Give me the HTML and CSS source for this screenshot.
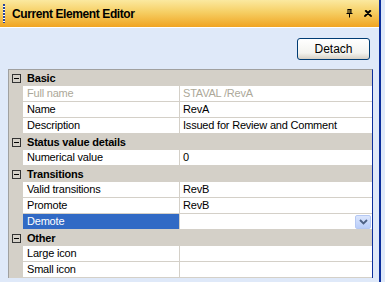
FILE: index.html
```html
<!DOCTYPE html>
<html lang="en">

<head>
    <meta charset="UTF-8">
    <meta name="viewport" content="width=device-width, initial-scale=1.0">
    <title>Current Element Editor</title>
    <link rel="stylesheet" href="styles.css">
</head>

<body>

    <div class="panel">
        <div class="panel-main">
            <!-- Barre de titre -->
            <div class="titlebar">
                <span class="grip"></span>
                <span class="title">Current Element Editor</span>
                <span class="title-tools">
                    <svg class="pin" width="7" height="9" viewBox="0 0 7 9">
                        <path d="M1.5 0.5h4M2 0.5v4M5 0.5v4M4 0.5v4M0.5 4.5h6M3.5 4.5v4" stroke="#000" stroke-width="1" fill="none" />
                    </svg>
                    <svg class="close" width="8" height="7" viewBox="0 0 8 7">
                        <path d="M1 0.5l6 6M7 0.5l-6 6M2 0.5l6 6M6 0.5l-6 6" stroke="#000" stroke-width="1.2" fill="none" />
                    </svg>
                </span>
            </div>

            <div class="panel-body">
                <div class="toolbar">
                    <button type="button" class="detach-btn">Detach</button>
                </div>

                <!-- Grille de propriétés -->
                <div class="prop-grid">
                    <div class="row category">
                        <span class="gutter"><span class="toggle"></span></span>
                        <span class="cat-label">Basic</span>
                    </div>
                    <div class="row">
                        <span class="gutter"></span>
                        <span class="label readonly">Full name</span>
                        <span class="value readonly">STAVAL /RevA</span>
                    </div>
                    <div class="row">
                        <span class="gutter"></span>
                        <span class="label">Name</span>
                        <span class="value">RevA</span>
                    </div>
                    <div class="row">
                        <span class="gutter"></span>
                        <span class="label">Description</span>
                        <span class="value">Issued for Review and Comment</span>
                    </div>

                    <div class="row category">
                        <span class="gutter"><span class="toggle"></span></span>
                        <span class="cat-label">Status value details</span>
                    </div>
                    <div class="row">
                        <span class="gutter"></span>
                        <span class="label">Numerical value</span>
                        <span class="value">0</span>
                    </div>

                    <div class="row category">
                        <span class="gutter"><span class="toggle"></span></span>
                        <span class="cat-label">Transitions</span>
                    </div>
                    <div class="row">
                        <span class="gutter"></span>
                        <span class="label">Valid transitions</span>
                        <span class="value">RevB</span>
                    </div>
                    <div class="row">
                        <span class="gutter"></span>
                        <span class="label">Promote</span>
                        <span class="value">RevB</span>
                    </div>
                    <div class="row">
                        <span class="gutter"></span>
                        <span class="label selected">Demote</span>
                        <span class="value">
                            <span class="dropdown-btn">
                                <svg width="9" height="6" viewBox="0 0 9 6">
                                    <path d="M1 1l3.5 3.5L8 1" stroke="#4d6185" stroke-width="1.8" fill="none" />
                                </svg>
                            </span>
                        </span>
                    </div>

                    <div class="row category">
                        <span class="gutter"><span class="toggle"></span></span>
                        <span class="cat-label">Other</span>
                    </div>
                    <div class="row">
                        <span class="gutter"></span>
                        <span class="label">Large icon</span>
                        <span class="value"></span>
                    </div>
                    <div class="row">
                        <span class="gutter"></span>
                        <span class="label">Small icon</span>
                        <span class="value"></span>
                    </div>
                </div>
            </div>
        </div>
        <div class="panel-edge"></div>
    </div>

</body>
</html>
```

FILE: styles.css
```css
body {
    margin: 0;
    font-family: "Liberation Sans", Arial, sans-serif;
    font-size: 11px;
    letter-spacing: -0.2px;
    background-color: #dfe9f9;
}

.panel {
    display: flex;
    width: 385px;
    height: 282px;
    overflow: hidden;
}

.panel-main {
    width: 379px;
    display: flex;
    flex-direction: column;
}

.panel-edge {
    width: 4px;
    border-left: 2px solid #0b2e9c;
    background-color: #dfe9f9;
}

/* Barre de titre */
.titlebar {
    height: 27px;
    display: flex;
    align-items: center;
    background: linear-gradient(to bottom, #fbe9a0 0%, #f6cf64 45%, #f0a422 100%);
    border-bottom: 1px solid #fff;
}

.grip {
    width: 2px;
    height: 19px;
    margin-left: 3px;
    background: repeating-linear-gradient(to bottom, #28449c 0, #28449c 2px, #fff 2px, #fff 3px);
}

.title {
    margin-left: 7px;
    font-weight: bold;
    font-size: 12px;
    letter-spacing: -0.4px;
    color: #000;
    flex: 1;
}

.title-tools {
    display: flex;
    align-items: center;
    gap: 11px;
    margin-right: 7px;
}

/* Zone principale */
.panel-body {
    flex: 1;
}

.toolbar {
    display: flex;
    justify-content: flex-end;
    padding: 10px 9px 0 0;
    height: 31px;
}

.detach-btn {
    width: 73px;
    height: 22px;
    border: 1px solid #003c74;
    border-radius: 3px;
    background: linear-gradient(to bottom, #ffffff 0%, #f3f3ef 70%, #d6d0c5 100%);
    font-family: "Liberation Sans", Arial, sans-serif;
    font-size: 12px;
    color: #000;
    padding: 0;
}

.prop-grid {
    margin-left: 8px;
    width: 363px;
    border-top: 1px solid #a0a0a0;
    border-left: 1px solid #a0a0a0;
    border-right: 1px solid #0b2e9c;
    background-color: #d4d0c8;
}

.row {
    display: flex;
    height: 16px;
}

.gutter {
    width: 14px;
    flex-shrink: 0;
    display: flex;
    align-items: center;
    justify-content: center;
}

.label,
.value {
    height: 15px;
    line-height: 15px;
    border-bottom: 1px solid #d4d0c8;
    background-color: #fff;
    white-space: nowrap;
    overflow: hidden;
}

.label {
    width: 152px;
    padding-left: 4px;
    border-right: 1px solid #d4d0c8;
}

.value {
    flex: 1;
    padding-left: 3px;
    display: flex;
    align-items: center;
    justify-content: space-between;
}

.readonly {
    color: #aca899;
}

.selected {
    background-color: #316ac5;
    color: #fff;
}

.category {
    font-weight: bold;
}

.cat-label {
    line-height: 16px;
    padding-left: 4px;
}

.toggle {
    position: relative;
    width: 7px;
    height: 7px;
    border: 1px solid #333;
}

.toggle::after {
    content: "";
    position: absolute;
    left: 1px;
    top: 3px;
    width: 5px;
    height: 1px;
    background-color: #000;
}

.dropdown-btn {
    margin-left: auto;
    margin-right: 1px;
    width: 14px;
    height: 12px;
    border-radius: 2px;
    background: linear-gradient(to bottom, #dbe6fd 0%, #b9cdf9 100%);
    border: 1px solid #b5c8f3;
    display: flex;
    align-items: center;
    justify-content: center;
}
```
